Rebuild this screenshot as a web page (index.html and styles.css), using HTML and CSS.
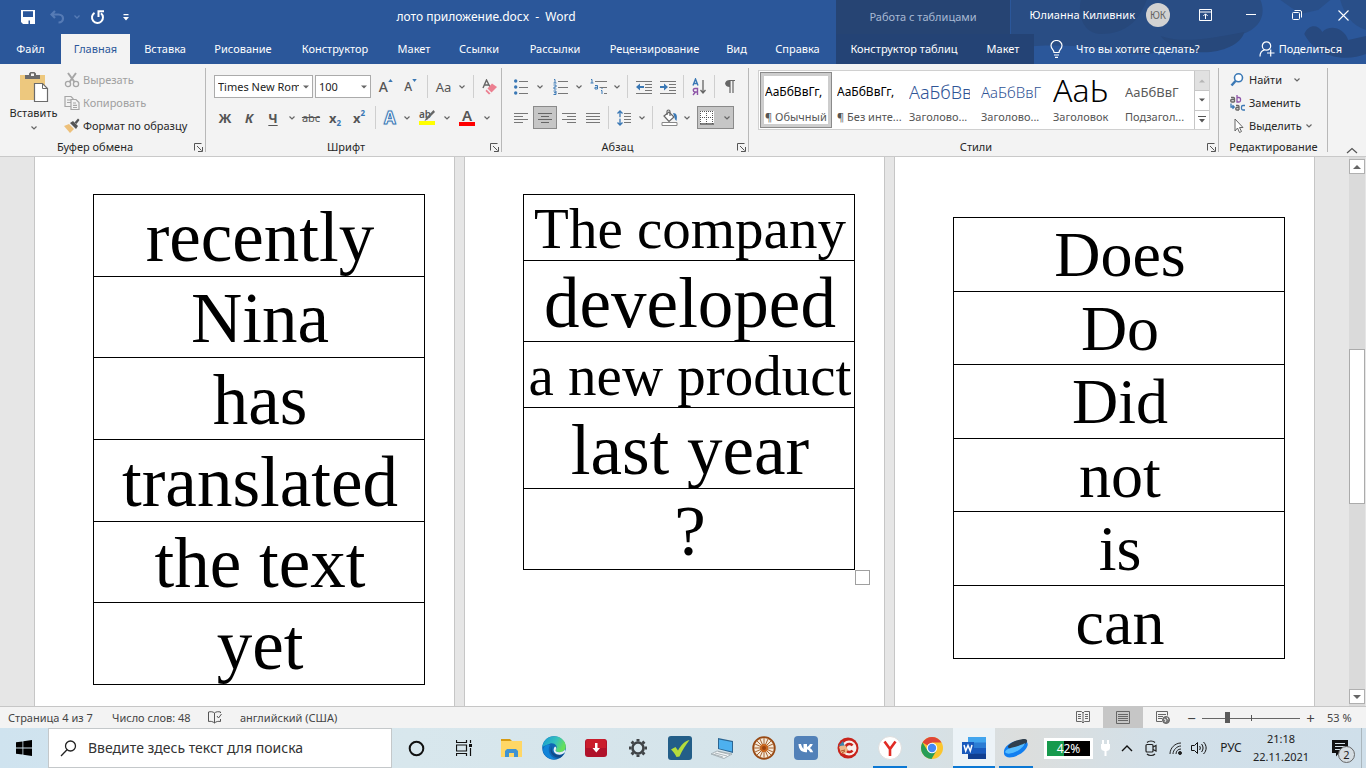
FILE: index.html
```html
<!DOCTYPE html>
<html lang="ru">
<head>
<meta charset="utf-8">
<title>лото приложение.docx - Word</title>
<link rel="stylesheet" href="styles.css">
</head>
<body>
<svg class="defs" aria-hidden="true">
  <symbol id="chev" viewBox="0 0 8 8"><path d="M1.500 2.500L4 5l2.500-2.500" fill="none" stroke="#666" stroke-width="1.200"/></symbol>
  <symbol id="tri" viewBox="0 0 8 8"><path d="M0 2h8L4 6z" fill="currentColor"/></symbol>
  <symbol id="launch" viewBox="0 0 9 9"><path d="M.5 7.500v-7h7M3 3l4.500 4.500M8.500 4v4.500H4" fill="none" stroke="#555"/></symbol>
</svg>
<div class="app">
  <header class="header">
    <svg class="pattern" viewBox="0 0 356 64" preserveAspectRatio="none" aria-hidden="true">
      <path d="M0 0h356v64H0z" fill="#2b579a"/>
      <path d="M0 0h250c6 14 0 28-18 34-20 8-44 6-58 10-20 6-34 12-50 10-30-6-70-12-124-6z" fill="#294d84"/>
      <path d="M70 0h66c-8 22-22 34-46 34-14 0-24-14-20-34zM150 36c24 8 50 2 84-4-4 14-26 22-48 20-18-2-30-8-36-16z" fill="#27487b"/>
      <path d="M294 34c4-10 14-10 18-2 8-8 22-4 26 8l18-4v18c-20 8-50 4-62-20z" fill="#27497f"/>
      <path d="M270 0h50l-12 10-18 4zM330 0h26v30c-14-4-22-16-26-30z" fill="#294f89"/>
    </svg>
    <div class="titlebar">
      <div class="title-main">
        <div class="qat">
          <button class="qbtn" aria-label="Сохранить"><svg width="14" height="14" viewBox="0 0 14 14"><path d="M0 0h14v14H2l-2-2zM2 1.500V6h10V1.500zM3 9v5h8V9z" fill="#fff" fill-rule="evenodd"/><path d="M2 12V1.500h10V7H2z" fill="#2b579a"/><path d="M1.500 7h11v2h-11zM5 10.500h2.500V14H3V9h8v5H9v-3.500z" fill="#fff"/></svg></button>
          <button class="qbtn dim" aria-label="Отменить"><svg width="15" height="14" viewBox="0 0 15 14"><path d="M5 1L1.500 4.500 5 8M2 4.500h6.500c6 0 6 8 0 8" fill="none" stroke="#567bb5" stroke-width="2.200"/></svg></button>
          <button class="qchev" aria-label="Список отмен"><svg width="8" height="8" viewBox="0 0 8 8"><path d="M1.500 2.500L4 5l2.500-2.500" fill="none" stroke="#567bb5" stroke-width="1.300"/></svg></button>
          <button class="qbtn" aria-label="Повторить"><svg width="15" height="15" viewBox="0 0 15 15"><path d="M4.500 2.800A5.500 5.500 0 1 0 11 3.200" fill="none" stroke="#fff" stroke-width="2"/><path d="M8.500 7V1.200h5.500" fill="none" stroke="#fff" stroke-width="2"/></svg></button>
          <button class="qbtn" aria-label="Настройка панели"><svg width="6" height="7" viewBox="0 0 6 7"><path d="M.5 0h5v1.200h-5zM0 3h6L3 6.500z" fill="#fff"/></svg></button>
        </div>
        <div class="doc-title">лото приложение.docx&nbsp; -&nbsp; Word</div>
      </div>
      <div class="ctx-title">Работа с таблицами</div>
      <div class="account">
        <span class="user">Юлианна Киливник</span>
        <span class="avatar">ЮК</span>
        <button class="cap" aria-label="Параметры ленты"><svg width="13" height="12" viewBox="0 0 13 12" fill="none" stroke="#fff"><path d="M.5.500h12v11H.5zM.5 3h12M6.500 10V5M4.300 7l2.200-2.200L8.700 7"/></svg></button>
        <button class="cap" aria-label="Свернуть"><svg width="10" height="10"><path d="M0 4.500h10" stroke="#fff"/></svg></button>
        <button class="cap" aria-label="Восстановить"><svg width="10" height="10" viewBox="0 0 10 10" fill="none" stroke="#fff"><rect x=".5" y="2.500" width="7" height="7" rx="1"/><path d="M2.500.500H8A1.500 1.500 0 0 1 9.500 2v5.500"/></svg></button>
        <button class="cap" aria-label="Закрыть"><svg width="11" height="11"><path d="M.5.500l10 10M10.500.500l-10 10" stroke="#fff" stroke-width="1.100"/></svg></button>
      </div>
    </div>
    <div class="tabbar">
      <nav class="tabs">
        <button>Файл</button><button class="active">Главная</button><button>Вставка</button><button>Рисование</button><button>Конструктор</button><button>Макет</button><button>Ссылки</button><button>Рассылки</button><button>Рецензирование</button><button>Вид</button><button>Справка</button>
      </nav>
      <nav class="ctx-tabs"><button>Конструктор таблиц</button><button>Макет</button></nav>
      <button class="tell"><svg width="13" height="18" viewBox="0 0 13 18" fill="none" stroke="#fff" stroke-width="1.200"><path d="M4 12.500c0-3-3-3.500-3-7a5.500 5 0 0 1 11 0c0 3.500-3 4-3 7zM4 15h5M5 17.300h3"/></svg>Что вы хотите сделать?</button>
      <button class="share"><svg width="16" height="16" viewBox="0 0 16 16" fill="none" stroke="#fff" stroke-width="1.200"><circle cx="7.500" cy="5" r="4.200"/><path d="M1 15.500c0-4 2-6 4.500-6.700M8 12h7.500M11.700 8.500v7"/></svg>Поделиться</button>
    </div>
  </header>

  <section class="ribbon" aria-label="Лента">
    <div class="group g-clip">
      <div class="clip">
        <button class="paste"><svg width="30" height="31" viewBox="0 0 30 31"><path d="M1 4h25v25H1z" fill="#edc87e"/><path d="M6 8V4h4V2.500L11.500 1h4L17 2.500V4h4v4z" fill="#6b6b6b"/><path d="M12 2.500h3V5h-3z" fill="#f3f3f3"/><path d="M15.500 12.500h8l5 5v13h-13z" fill="#fff" stroke="#6b6b6b" stroke-width="1.200"/><path d="M23.500 12.500v5h5" fill="none" stroke="#6b6b6b"/></svg><span>Вставить</span><svg width="8" height="8"><use href="#chev"/></svg></button>
        <div class="rows">
          <button class="line off"><svg width="16" height="16" viewBox="0 0 16 16" fill="none" stroke="#a6a6a6" stroke-width="1.300"><circle cx="4" cy="12" r="2.600"/><circle cx="12" cy="12" r="2.600"/><path d="M4 1l6.500 9M12 1L5.500 10" stroke-width="2"/></svg>Вырезать</button>
          <button class="line off"><svg width="16" height="16" viewBox="0 0 16 16" fill="#f3f3f3" stroke="#a6a6a6" stroke-width="1.200"><path d="M1 1.500h6l2 2v8H1zM3 5h4M3 7.500h4"/><path d="M7 4.500h5l3 3v7H7zM9 8h3M9 10.300h4M9 12.500h4"/></svg>Копировать</button>
          <button class="line"><svg width="16" height="16" viewBox="0 0 16 16"><path d="M0 8l5-2 5 5-4 4z" fill="#edc07a"/><path d="M6 5l3-2 5 5-2 3z" fill="#555"/><path d="M10.500 4.500l3.500-4L15.500 2l-3 4z" fill="#555"/></svg>Формат по образцу</button>
        </div>
      </div>
      <div class="caption"><span>Буфер обмена</span><button aria-label="Буфер обмена"><svg width="9" height="9"><use href="#launch"/></svg></button></div>
    </div>

    <div class="group g-font">
      <div class="tools">
        <div class="trow">
          <div class="combo c-name"><input aria-label="Шрифт" value="Times New Roman"><button aria-label="Список шрифтов"><svg width="6" height="6"><use href="#tri"/></svg></button></div>
          <div class="combo c-size"><input aria-label="Размер шрифта" value="100"><button aria-label="Список размеров"><svg width="6" height="6"><use href="#tri"/></svg></button></div>
          <button class="t wide grow-a">A<svg width="5" height="3" viewBox="0 0 6 4"><path d="M0 4h6L3 0z" fill="#3a78b5"/></svg></button>
          <button class="t grow-a small">A<svg width="5" height="3" viewBox="0 0 6 4"><path d="M0 0h6L3 4z" fill="#3a78b5"/></svg></button>
          <i class="sep"></i>
          <button class="t aa">Aa</button><button class="c" aria-label="Регистр"><svg width="8" height="8"><use href="#chev"/></svg></button>
          <i class="sep"></i>
          <button class="t" aria-label="Очистить формат"><svg width="16" height="16" viewBox="0 0 16 16"><path d="M1 9l3.500-8L8 8M2.500 6h4" fill="none" stroke="#666" stroke-width="1.400"/><path d="M10 4.500l5 3.500-5.500 5.500-4-4z" fill="#ec7f90"/><path d="M4.500 10.500l4 4-1.500 1-3.500-3.500z" fill="#ec7f90"/></svg></button>
        </div>
        <div class="trow">
          <button class="t bold">Ж</button><button class="t bold ital">К</button><button class="t bold under">Ч</button><button class="c" aria-label="Подчеркивание"><svg width="8" height="8"><use href="#chev"/></svg></button>
          <button class="t strike">abc</button><button class="t bold">x<sub>2</sub></button><button class="t bold">x<sup>2</sup></button>
          <i class="sep"></i>
          <button class="t slim effect">A</button><button class="c" aria-label="Эффекты"><svg width="8" height="8"><use href="#chev"/></svg></button>
          <button class="t wide mark" aria-label="Цвет выделения"><svg width="18" height="17" viewBox="0 0 18 17"><text x="1" y="9" class="ab">ab</text><path d="M15.500 1L8 9l-1.500 3 3-1.500L17 3z" fill="#666"/><path d="M1 12h16v4H1z" fill="#ff0"/></svg></button><button class="c" aria-label="Цвета выделения"><svg width="8" height="8"><use href="#chev"/></svg></button>
          <button class="t wide fcolor">A</button><button class="c" aria-label="Цвета текста"><svg width="8" height="8"><use href="#chev"/></svg></button>
        </div>
      </div>
      <div class="caption"><span>Шрифт</span><button aria-label="Шрифт"><svg width="9" height="9"><use href="#launch"/></svg></button></div>
    </div>

    <div class="group g-para">
      <div class="tools">
        <div class="trow">
          <button class="t" aria-label="Маркеры"><svg width="14" height="16" viewBox="0 0 14 16"><g fill="#3a78b5"><circle cx="1.700" cy="2" r="1.700"/><circle cx="1.700" cy="8" r="1.700"/><circle cx="1.700" cy="14" r="1.700"/></g><path d="M5 2.500h9M5 8.500h9M5 14.500h9" stroke="#777"/></svg></button><button class="c" aria-label="Вид маркера"><svg width="8" height="8"><use href="#chev"/></svg></button>
          <button class="t wide" aria-label="Нумерация"><svg width="15" height="16" viewBox="0 0 15 16"><path d="M1 .500h1v3.500M.500 4h3M.500 6h2.500v2H1v2h2.500M.500 12h2.500v3.500H.500M1 13.700h2" fill="none" stroke="#3a78b5"/><path d="M5 2.500h10M5 8.500h10M5 14.500h10" stroke="#777"/></svg></button><button class="c tight" aria-label="Вид номера"><svg width="8" height="8"><use href="#chev"/></svg></button>
          <button class="t wide" aria-label="Многоуровневый список"><svg width="17" height="16" viewBox="0 0 17 16"><path d="M1 .500h1v3.500M.500 4h3M5 6.500h2.500V10H5V8.300h2M11 11.500h1V15M12 9v1" fill="none" stroke="#3a78b5"/><path d="M5 2.500h12M9.500 8.500H17M14 14.500h3" stroke="#777"/></svg></button><button class="c tight" aria-label="Вид списка"><svg width="8" height="8"><use href="#chev"/></svg></button>
          <i class="sep"></i>
          <button class="t" aria-label="Уменьшить отступ"><svg width="16" height="14" viewBox="0 0 16 14"><path d="M0 1.500h16M9 4.500h7M9 7.500h7M9 10.500h7M0 13.500h16" stroke="#777"/><path d="M0 7l4-3.500V6h4v2H4v2.500z" fill="#3a78b5"/></svg></button>
          <button class="t" aria-label="Увеличить отступ"><svg width="16" height="14" viewBox="0 0 16 14"><path d="M0 1.500h16M9 4.500h7M9 7.500h7M9 10.500h7M0 13.500h16" stroke="#777"/><path d="M8 7L4 3.500V6H0v2h4v2.500z" fill="#3a78b5"/></svg></button>
          <i class="sep s7"></i>
          <button class="t" aria-label="Сортировка"><svg width="14" height="18" viewBox="0 0 14 18"><path d="M1 7.500L3.500 1 6 7.500M2 5.500h3" fill="none" stroke="#3a78b5" stroke-width="1.400"/><path d="M5.500 17v-6.500H3c-2.300 0-2.300 3.500 0 3.500h2.500M3.500 14L1 17" fill="none" stroke="#8e55a8" stroke-width="1.400"/><path d="M11 2v13M8.500 12l2.500 3 2.500-3" fill="none" stroke="#666" stroke-width="1.300"/></svg></button>
          <i class="sep s7"></i>
          <button class="t" aria-label="Все знаки"><svg width="10" height="13" viewBox="0 0 10 13"><path d="M4 .5h6M5 0v13M8 0v13" stroke="#666" stroke-width="1.200"/><path d="M5 0v7C-1.500 7-1.500 0 5 0z" fill="#666"/></svg></button>
        </div>
        <div class="trow">
          <button class="t" aria-label="По левому краю"><svg width="14" height="12"><path d="M0 1.500h14M0 4.500h9M0 7.500h14M0 10.500h9" stroke="#777"/></svg></button>
          <button class="t on" aria-label="По центру"><svg width="14" height="12"><path d="M0 1.500h14M3 4.500h8M0 7.500h14M3 10.500h8" stroke="#666"/></svg></button>
          <button class="t" aria-label="По правому краю"><svg width="14" height="12"><path d="M0 1.500h14M5 4.500h9M0 7.500h14M5 10.500h9" stroke="#777"/></svg></button>
          <button class="t" aria-label="По ширине"><svg width="14" height="12"><path d="M0 1.500h14M0 4.500h14M0 7.500h14M0 10.500h14" stroke="#777"/></svg></button>
          <i class="sep s7"></i>
          <button class="t" aria-label="Интервал"><svg width="14" height="16" viewBox="0 0 14 16"><path d="M3 1v14M.500 3.500L3 1l2.500 2.500M.500 12.500L3 15l2.500-2.500" fill="none" stroke="#3a78b5" stroke-width="1.300"/><path d="M1 7.200h4v1.500H1z" fill="#f3f3f3"/><path d="M7 3.500h7M7 6.500h7M7 9.500h7M7 12.500h7" stroke="#777"/></svg></button><button class="c tight" aria-label="Интервалы"><svg width="8" height="8"><use href="#chev"/></svg></button>
          <i class="sep"></i>
          <button class="t" aria-label="Заливка"><svg width="17" height="17" viewBox="0 0 17 17"><path d="M3 7l5-4 5 5-5 4.500z" fill="#fff" stroke="#666" stroke-width="1.200"/><path d="M6 6V2.500C6 .500 9 .500 9 2.500V7" fill="none" stroke="#666" stroke-width="1.200"/><path d="M12 4c4 0 4.500 3 3.500 8-1-1-2-2-2-4z" fill="#3a78b5"/><path d="M1 13.500h15v3H1z" fill="#fff" stroke="#888"/></svg></button><button class="c tight" aria-label="Цвет заливки"><svg width="8" height="8"><use href="#chev"/></svg></button>
          <button class="t on borders" aria-label="Границы"><svg width="14" height="14" viewBox="0 0 14 14"><path d="M0 0h14v14H0z" fill="#fff"/><path d="M.5 0v13M6.500 0v13M12.500 0v13M0 .5h14M0 6.500h14" stroke="#555" stroke-dasharray="1 1"/><path d="M0 13h14" stroke="#555" stroke-width="1.500"/></svg><svg width="8" height="8"><use href="#chev"/></svg></button>
        </div>
      </div>
      <div class="caption"><span>Абзац</span><button aria-label="Абзац"><svg width="9" height="9"><use href="#launch"/></svg></button></div>
    </div>

    <div class="group g-style">
      <div class="gallery">
        <button class="style sel"><b class="s-norm">АаБбВвГг,</b><span>¶ Обычный</span></button>
        <button class="style"><b class="s-norm">АаБбВвГг,</b><span>¶ Без инте...</span></button>
        <button class="style"><b class="s-h1">АаБбВв</b><span>Заголово...</span></button>
        <button class="style"><b class="s-h2">АаБбВвГ</b><span>Заголово...</span></button>
        <button class="style"><b class="s-title">АаЬ</b><span>Заголовок</span></button>
        <button class="style"><b class="s-sub">АаБбВвГ</b><span>Подзагол...</span></button>
        <div class="gscroll">
          <button class="dis" aria-label="Вверх"><svg class="flip" width="6" height="6"><use href="#tri"/></svg></button>
          <button aria-label="Вниз"><svg width="6" height="6"><use href="#tri"/></svg></button>
          <button aria-label="Все стили"><svg width="8" height="9" viewBox="0 0 8 9"><path d="M0 1.500h8" stroke="#555"/><path d="M1 4h6L4 7.500z" fill="#555"/></svg></button>
        </div>
      </div>
      <div class="caption"><span>Стили</span><button aria-label="Стили"><svg width="9" height="9"><use href="#launch"/></svg></button></div>
    </div>

    <div class="group g-edit">
      <div class="rows">
        <button class="line"><svg width="16" height="14" viewBox="0 0 16 14"><circle cx="8.500" cy="4.800" r="4" fill="#fff" stroke="#3a78b5" stroke-width="1.600"/><path d="M5.500 8L1.500 12.500" stroke="#3a78b5" stroke-width="2.500"/></svg>Найти<svg class="after" width="8" height="8"><use href="#chev"/></svg></button>
        <button class="line"><svg width="16" height="16" viewBox="0 0 16 16" fill="none" stroke-width="1.300"><path d="M1 2.500h2.500q1 0 1 1V7M4.500 4.500H2q-1.300 0-1.300 1.200T2 7h2.500" stroke="#666"/><path d="M7 0v7h2q1.500 0 1.500-1.500V4Q10.500 2.500 9 2.500H7" stroke="#8e55a8"/><path d="M6 10.500h2q1 0 1 1V15M9 12.500H7q-1.300 0-1.300 1.200T7 15h2" stroke="#666"/><path d="M15 10.500h-2q-1.500 0-1.500 1.500v1.500q0 1.500 1.500 1.500h2M1 8.500V12h3M2.500 10.300L4.200 12l-1.700 1.700" stroke="#3a78b5"/></svg>Заменить</button>
        <button class="line"><svg width="16" height="16" viewBox="0 0 16 16"><path d="M5 1v12l2.500-3 2 4.500 2-1-2-4H13z" fill="#fff" stroke="#666"/></svg>Выделить<svg width="8" height="8"><use href="#chev"/></svg></button>
      </div>
      <div class="caption"><span>Редактирование</span></div>
    </div>
    <button class="collapse" aria-label="Свернуть ленту"><svg width="12" height="7"><path d="M1 6l5-4.500L11 6" fill="none" stroke="#555" stroke-width="1.200"/></svg></button>
  </section>

  <main class="workspace">
    <div class="pages">
      <article class="page">
        <table class="words xl"><tbody><tr><td>recently</td></tr><tr><td>Nina</td></tr><tr><td>has</td></tr><tr><td>translated</td></tr><tr><td>the text</td></tr><tr><td>yet</td></tr></tbody></table>
      </article>
      <article class="page">
        <div class="tablewrap">
          <table class="words mixed"><tbody><tr class="short"><td>The company</td></tr><tr><td>developed</td></tr><tr class="short"><td>a new product</td></tr><tr><td>last year</td></tr><tr><td>?</td></tr></tbody></table>
          <span class="handle"></span>
        </div>
      </article>
      <article class="page low">
        <table class="words lg"><tbody><tr><td>Does</td></tr><tr><td>Do</td></tr><tr><td>Did</td></tr><tr><td>not</td></tr><tr><td>is</td></tr><tr><td>can</td></tr></tbody></table>
      </article>
    </div>
    <div class="scroll">
      <button aria-label="Прокрутить вверх"><svg class="flip" width="8" height="8"><use href="#tri"/></svg></button>
      <div class="track"><div class="thumb"></div></div>
      <button aria-label="Прокрутить вниз"><svg width="8" height="8"><use href="#tri"/></svg></button>
    </div>
  </main>

  <footer class="status">
    <span class="st-page">Страница 4 из 7</span>
    <span class="st-words">Число слов: 48</span>
    <svg width="14" height="13" viewBox="0 0 14 13" fill="none" stroke="#555"><path d="M6.500 12V2C5 .5 2.500.500.500 1v9.500c2-.5 4.500 0 6 1.500 1.500-1.500 4-2 6-1.500V8M6.500 2C8 .500 10.500.500 12.500 1v1M9 5l1.500 2L13.500 3"/></svg>
    <span class="st-lang">английский (США)</span>
    <div class="views">
      <button aria-label="Режим чтения"><svg width="14" height="13" viewBox="0 0 14 13" fill="none" stroke="#666"><path d="M.5.500h5L7 2l1.500-1.500h5v10h-5L7 12l-1.500-1.500h-5zM7 2v10M2 3.500h3M2 5.500h3M2 7.500h3M9 3.500h3M9 5.500h3M9 7.500h3"/></svg></button>
      <button class="on" aria-label="Разметка страницы"><svg width="14" height="13" fill="none" stroke="#666"><path d="M.5.500h13v12H.5zM2 3.500h10M2 5.500h10M2 7.500h10M2 9.500h10"/></svg></button>
      <button aria-label="Веб-документ"><svg width="14" height="13" viewBox="0 0 14 13" fill="none" stroke="#666"><path d="M6 10.500H.500V.500h11v4M2 3.500h8M2 5.500h5M2 7.500h4"/><circle cx="10" cy="9" r="3.500" fill="#777"/><path d="M8 8l2 1-1 2M11 6.500l1 2" stroke="#eee"/></svg></button>
    </div>
    <div class="zoomer">
      <button aria-label="Уменьшить">−</button>
      <input type="range" min="0" max="100" value="25" aria-label="Масштаб">
      <button aria-label="Увеличить">+</button>
      <span>53 %</span>
    </div>
  </footer>

  <div class="taskbar">
    <button class="start" aria-label="Пуск"><svg width="16" height="16" viewBox="0 0 16 16"><path d="M0 2.300l6.500-.9v6.200H0zM7.300 1.300L16 0v7.600H7.300zM0 8.400h6.500v6.200L0 13.700zM7.300 8.400H16V16l-8.700-1.300z"/></svg></button>
    <label class="search"><svg width="17" height="17" viewBox="0 0 17 17" fill="none" stroke="#222" stroke-width="1.300"><circle cx="10.500" cy="6" r="5"/><path d="M7 9.800L1 16"/></svg><input placeholder="Введите здесь текст для поиска" aria-label="Поиск"></label>
    <button class="start" aria-label="Кортана"><svg width="17" height="17"><circle cx="8.500" cy="8.500" r="6.800" fill="none" stroke="#111" stroke-width="2"/></svg></button>
    <button class="start" aria-label="Представление задач"><svg width="17" height="16" viewBox="0 0 17 16" fill="none" stroke="#111"><path d="M.5 0v2.500h10V0M.5 16v-2.500h10V16M.500 5h10v6H.500zM14.500 0v3M14.500 8v8" stroke-width="1.200"/><path d="M13 4h3v3h-3z" fill="#111" stroke="none"/></svg></button>
    <div class="apps">
      <button aria-label="Проводник"><svg width="22" height="20" viewBox="0 0 22 20"><path d="M0 1h9l2 2H0z" fill="#d79b12"/><path d="M0 3h21v16H0z" fill="#ffd766"/><path d="M4 19v-6l2-2h9l2 2v6h-4v-4H8v4z" fill="#3f93d2"/></svg></button>
      <button aria-label="Edge"><svg width="24" height="24" viewBox="0 0 24 24"><defs><linearGradient id="eg" x1="0" y1="0" x2="1" y2=".4"><stop stop-color="#1597d4"/><stop offset=".6" stop-color="#35c1bd"/><stop offset="1" stop-color="#66e05a"/></linearGradient></defs><circle cx="12" cy="12" r="11.800" fill="#0f66b4"/><path d="M.3 11C1.500 4 6 .200 12 .200c7 0 11.800 5 11.800 10 0 4-3 6-6.500 6-3 0-4.300-1.200-3.500-2.500 3-4-2-7.500-6-6C4 9 2.500 10 .3 11z" fill="url(#eg)"/><path d="M8 9c-3 5-.5 12 6 14-6 1-11-2-13-8 0-4 3-7 7-6z" fill="#1284d8"/><path d="M10 10c-2 5 2 9 7 9 2 0 4-1 5-2-.5 1.500-2 3.500-4 4.700C11 22 6 16 10 10z" fill="#114a8b"/><path d="M13.800 13.700c-.8 1.300.5 2.500 3.500 2.500 2.500 0 4.500-1 5.700-2.700l.5 2c-2 3.500-8 4.500-11 1-1.500-2-1-4.500.5-6 1.500.5 1.500 2.200.8 3.200z" fill="#e4eff6"/></svg></button>
      <button aria-label="Загрузчик"><svg width="22" height="18"><rect width="22" height="18" rx="3" fill="#b0122a"/><path d="M1 3a3 3 0 0 1 3-3h14a3 3 0 0 1 3 3v6H1z" fill="#ca1d2c"/><path d="M10 4h2.500v5H15l-3.700 4.500L7.500 9H10z" fill="#fff"/></svg></button>
      <button aria-label="Параметры"><svg width="20" height="20" viewBox="-10 -10 20 20"><circle r="5.500" fill="none" stroke="#404447" stroke-width="2.600"/><path d="M0-6.500V-9M0 6.500V9M-6.500 0H-9M6.500 0H9M-4.600-4.600l-1.800-1.800M4.600 4.600l1.800 1.800M-4.600 4.600l-1.800 1.800M4.600-4.600l1.800-1.800" stroke="#404447" stroke-width="3"/></svg></button>
      <button aria-label="Задачи"><svg width="24" height="24"><rect width="24" height="24" rx="3" fill="#235e88"/><path d="M3 13.500l4.500-2.500 2.500 3.500C13 9 17 5 21.500 4 18 8.500 14 14.500 11.500 20.500l-3 .5C7 18 5 15 3 13.500z" fill="#b5dc3c"/></svg></button>
      <button aria-label="Компьютер"><svg width="24" height="22" viewBox="0 0 24 22"><path d="M8 1l15 3v12L8 12z" fill="#2b6592"/><path d="M9 2.500L22 5v9.500L9 11.500z" fill="#4db0ef"/><path d="M7 14l15 3-8 4.500L1 17z" fill="#f4f7f9" stroke="#8d999f" stroke-width=".7"/><path d="M5 16l12 3M8 14.500l12 3M3 17l10 3" stroke="#9ba6aa" stroke-width=".8"/></svg></button>
      <button aria-label="Колесо"><svg width="24" height="24" viewBox="-12 -12 24 24"><circle r="10.800" fill="#f6ead9" stroke="#984913" stroke-width="1.800"/><path d="M0-10V10M-10 0H10M-7-7L7 7M-7 7L7-7M-4-9L4 9M-9-4L9 4M4-9L-4 9M9-4L-9 4" stroke="#9d5520" stroke-width=".9"/><circle r="4" fill="#c9661c"/><circle r="2" fill="#98410d"/></svg></button>
      <button aria-label="ВКонтакте"><svg width="24" height="24"><rect width="24" height="24" rx="4" fill="#5281b8"/><path d="M4.500 8H7q1 4 2.500 5V8h3.500v3q2-1 3-3h2.800q-.8 2.500-2.800 4 2.200 1.500 3.200 4.200h-3q-1-2.500-3.200-3v3h-1.200C7 16.200 4.700 13 4.500 8z" fill="#fff"/></svg></button>
      <button aria-label="CCleaner"><svg width="22" height="22" viewBox="0 0 22 22"><circle cx="11" cy="11" r="10.500" fill="#c8241c"/><circle cx="12" cy="11" r="7.500" fill="#f7efec"/><path d="M15.500 8.500a4 4 0 1 0 0 5" fill="none" stroke="#c8241c" stroke-width="2.600"/><path d="M2 10l4-3 3 2 2 4-3 4-4-1z" fill="#eeb887"/><path d="M1.500 9L6 4l1.500 4.500z" fill="#3c84ad"/><path d="M4 14l4-1M5 16l3-2" stroke="#b5552a"/></svg></button>
      <button class="run" aria-label="Яндекс Браузер"><svg width="24" height="24"><circle cx="12" cy="12" r="11.500" fill="#fff" stroke="#ddd"/><path d="M6.500 5.500L12 13l5.500-7.500M12 12.500V20" fill="none" stroke="#e12b24" stroke-width="2.600"/></svg></button>
      <button aria-label="Chrome"><svg width="22" height="22" viewBox="0 0 22 22"><circle cx="11" cy="11" r="11" fill="#fbc52e"/><path d="M11 11L1.500 5.500A11 11 0 0 1 20.500 5.500H11z" fill="#df4537"/><path d="M1.500 5.500A11 11 0 0 0 10.500 22l5-8.500L6.500 13.500z" fill="#279d57"/><circle cx="11" cy="11" r="5.200" fill="#fff"/><circle cx="11" cy="11" r="4.200" fill="#4688f4"/></svg></button>
      <button class="run current" aria-label="Word"><svg width="24" height="22" viewBox="0 0 24 22"><path d="M6 0h18v22H6z" fill="#2b7cd3"/><path d="M6 0h18v5.500H6z" fill="#41a5ee"/><path d="M6 11h18v5.500H6z" fill="#185abd"/><path d="M6 16.500h18V22H6z" fill="#103f91"/><path d="M0 5h12v12H0z" fill="#185abd"/><path d="M2 8l1.700 6L6 8.500 8.300 14 10 8" fill="none" stroke="#fff" stroke-width="1.500"/></svg></button>
      <button class="run" aria-label="Яндекс Диск"><svg width="26" height="20" viewBox="0 0 26 20"><path d="M1 15C0 9 8 3 19 2c7 0 7 6 3 10-5 6-19 11-21 4z" fill="#127ff0"/><path d="M5 8c4-5 12-7 17-7 4 1 2 5-2 6-5 3-16 6-15 1z" fill="#30404e"/><path d="M2 14c2-5 11-4 20-9-2 7-17 14-20 9z" fill="#55bcff"/></svg></button>
    </div>
    <div class="tray">
      <div class="battery"><span>42%</span></div>
      <svg width="11" height="16" viewBox="0 0 11 16"><path d="M2 0h2v4h3V0h2v4h1v4c0 2-2 3-3.500 3v5h-2v-5C3 11 1 10 1 8V4h1z" fill="#fff"/></svg>
      <button aria-label="Скрытые значки"><svg width="12" height="8"><path d="M1 7l5-5 5 5" fill="none" stroke="#111" stroke-width="1.400"/></svg></button>
      <button aria-label="Камера"><svg width="12" height="17" viewBox="0 0 12 17" fill="none" stroke="#222" stroke-width="1.200"><rect x="1" y="4.500" width="7" height="7.500" rx="1"/><path d="M8 7l3-1.500v5.500L8 9.500M2 2.500c2-2 6-2 8 0M2 14c2 2 6 2 8 0"/></svg></button>
      <button aria-label="Сеть"><svg width="13" height="13" viewBox="0 0 13 13" fill="none" stroke="#222"><path d="M1 12C1 6 6 1 12 1M4 12c0-4 4-8 8-8M7 12c0-3 2-5 5-5"/><circle cx="11" cy="11" r="1.500" fill="#222"/></svg></button>
      <button aria-label="Звук"><svg width="16" height="14" viewBox="0 0 16 14" fill="none" stroke="#111"><path d="M.5 4.500h3l3-3v11l-3-3h-3zM8.500 5c1 1 1 3 0 4M10.500 3c2 2.500 2 5.500 0 8M12.500 1c3.500 3.500 3.500 8.500 0 12"/></svg></button>
      <span class="lang">РУС</span>
      <div class="clock"><span>21:18</span><span>22.11.2021</span></div>
      <button class="note" aria-label="Уведомления"><svg width="16" height="17" viewBox="0 0 16 17"><path d="M0 0h16v13H7l-3 3.500V13H0z" fill="#111"/><path d="M3 3.500h10M3 6.500h10M3 9.500h6" stroke="#d4e0e8"/></svg><span>2</span></button>
    </div>
  </div>
</div>
</body>
</html>
```

FILE: styles.css
```css
* { box-sizing: border-box; }
body { margin: 0; font: 11px/16px "Noto Sans", "Open Sans", sans-serif; color: #262626; }
button { border: 0; padding: 0; background: none; font: inherit; color: inherit; white-space: nowrap; }
input { font: inherit; color: inherit; border: 0; padding: 0; background: none; min-width: 0; outline: 0; }
svg { display: block; flex: none; }
.defs { position: absolute; width: 0; height: 0; }
.flip { transform: rotate(180deg); }
.app { display: flex; flex-direction: column; height: 100vh; overflow: hidden; }

/* header */
.header { position: relative; background: #2b579a; color: #fff; flex: none; }
.pattern { position: absolute; right: 0; top: 0; width: 26%; height: 100%; }
.titlebar, .tabbar { position: relative; display: grid; }
.titlebar { grid-template-columns: 836px 174px 1fr; height: 34px; }
.title-main { display: flex; align-items: center; }
.qat { display: flex; align-items: center; padding-left: 16px; }
.qbtn { width: 24px; height: 24px; display: grid; place-items: center; margin-right: 5px; }
.qbtn.dim { margin-right: 0; }
.qchev { width: 16px; height: 24px; display: grid; place-items: center; }
.doc-title { flex: 1; text-align: center; padding-right: 7px; font-size: 12px; }
.ctx-title { background: #264473; color: #a9bad4; display: grid; place-items: center; }
.account { display: flex; align-items: center; justify-content: flex-end; height: 30px; }
.avatar { width: 24px; height: 24px; border-radius: 50%; background: #d2d2d2; color: #666; display: grid; place-items: center; margin: 0 12px 0 11px; font-size: 10px; }
.cap { width: 46px; height: 30px; display: grid; place-items: center; }
.tabbar { grid-template-columns: 836px 198px auto 1fr; height: 30px; }
.tabs { display: grid; grid-template-columns: 61px 69px 70px 86px 98px 60px 70px 82px 117px 47px 75px; }
.tabs .active { background: #f3f3f3; color: #2b579a; }
.ctx-tabs { display: grid; grid-template-columns: 136px 62px; background: #244375; }
.tell, .share { display: flex; align-items: center; }
.tell { padding-left: 16px; gap: 13px; }
.share { justify-self: end; gap: 4px; padding-right: 24px; }

/* ribbon */
.ribbon { display: flex; align-items: stretch; height: 93px; padding-top: 4px; background: #f3f3f3; border-bottom: 1px solid #c9c9c9; flex: none; }
.group { display: flex; flex-direction: column; background: linear-gradient(#b8b8b8, #b8b8b8) right top / 1px 84px no-repeat; }
.caption { margin-top: auto; height: 18px; display: flex; align-items: center; }
.caption span { flex: 1; text-align: center; }
.caption button { width: 16px; height: 16px; display: grid; place-items: center; }
.g-clip { width: 206px; }
.g-font { width: 296px; }
.g-para { width: 247px; }
.g-style { width: 470px; }
.g-edit { width: 109px; }
.clip { display: flex; }
.paste { width: 62px; display: flex; flex-direction: column; align-items: center; padding: 3px 0 0 5px; }
.paste span { margin: 3px 0; }
.rows { display: flex; flex-direction: column; }
.line { display: flex; align-items: center; height: 23px; gap: 3px; }
.clip .line { padding-left: 2px; }
.off { color: #a0a0a0; }
.tools { display: flex; flex-direction: column; padding: 7px 0 0 7px; gap: 8px; }
.trow { display: flex; height: 23px; align-items: stretch; }
.t { width: 24px; display: flex; align-items: center; justify-content: center; color: #555; font-size: 13px; }
.t.wide { width: 26px; }
.t.slim { width: 20px; }
.c { width: 14px; display: grid; place-items: center; }
.c.tight { width: 12px; }
.sep { width: 9px; display: flex; justify-content: center; }
.sep.s7 { width: 7px; }
.sep::before { content: ""; width: 1px; background: #cfcfcf; }
.combo { display: flex; background: #fff; border: 1px solid #ababab; margin-right: 2px; color: #222; }
.combo:first-child { margin-left: 1px; }
.combo input { flex: 1; padding-left: 3px; }
.combo button { width: 13px; display: grid; place-items: center; color: #666; }
.c-name { width: 99px; }
.c-size { width: 56px; }
.grow-a { font-size: 14px; font-weight: 500; }
.grow-a.small { font-size: 12px; }
.grow-a svg { align-self: flex-start; margin-top: 4px; }
.bold { font-weight: 700; }
.ital { font-style: italic; }
.under { text-decoration: underline; text-underline-offset: 2px; }
.strike { text-decoration: line-through; font-size: 11px; }
.t sub, .t sup { font-size: 8px; line-height: 8px; color: #3a78b5; }
.t sub { align-self: flex-end; margin-bottom: 2px; }
.t sup { align-self: flex-start; margin-top: 3px; }
.effect { font-size: 17px; color: #fff; -webkit-text-stroke: 1px #3a78b5; font-weight: 700; text-shadow: 0 0 2px #7fb0e0; }
.fcolor { font-size: 15px; font-weight: 600; line-height: 18px; align-items: flex-start; background: linear-gradient(#f00, #f00) 5px 16px / 16px 4px no-repeat; }
.mark svg { overflow: visible; }
.ab { font: 600 10px "Noto Sans", sans-serif; fill: #555; }
.on { background: #c6c6c6; outline: 1px solid #8a8a8a; outline-offset: -1px; }
.borders { width: 37px; justify-content: space-between; padding: 0 3px; margin-left: 4px; }
.gallery { display: flex; margin: 2px 9px 0; height: 60px; border: 1px solid #d0d0d0; background: #fff; padding-left: 1px; }
.style { width: 72px; padding: 4px 4px 0 5px; display: flex; flex-direction: column; text-align: left; color: #555; }
.style b { font-weight: 400; height: 34px; width: 61px; line-height: 34px; overflow: hidden; color: #000; }
.style span { width: 64px; line-height: 16px; }
.style.sel { border: 1px solid #8a8a8a; box-shadow: inset 0 0 0 3px #cdcdcd; padding: 2px 3px 0 4px; height: 56px; margin-top: 1px; }
.style b.s-norm { font-size: 12px; }
.style b.s-h1 { font-size: 18px; color: #2f5496; font-weight: 300; }
.style b.s-h2 { font-size: 15px; color: #2f5496; font-weight: 300; }
.style b.s-title { font-size: 32px; line-height: 30px; font-weight: 300; }
.style b.s-sub { font-size: 13px; color: #5a5a5a; }
.gscroll { margin-left: auto; width: 15px; display: grid; grid-template-rows: 1fr 1fr 1fr; border-left: 1px solid #c6c6c6; color: #555; }
.gscroll button { display: grid; place-items: center; }
.gscroll button + button { border-top: 1px solid #c6c6c6; }
.gscroll .dis { background: #e1e1e1; color: #b5b5b5; }
.g-edit .rows { padding-left: 11px; }
.after { margin-left: 8px; }
.collapse { margin: auto 8px 0 auto; height: 12px; }

/* document */
.workspace { flex: 1; min-height: 0; display: flex; background: #e6e6e6; }
.pages { flex: 1; display: flex; gap: 9px; padding-left: 34px; overflow: hidden; }
.page { flex: none; width: 421px; background: #fff; border: solid #c6c6c6; border-width: 0 1px; padding: 37px 29px 0 58px; }
.page.low { padding-top: 60px; }
.words { border-collapse: collapse; width: 332px; font-family: "Liberation Serif", serif; color: #000; text-align: center; table-layout: fixed; }
.words td { border: 1px solid #000; padding: 4px 0 0 2px; white-space: nowrap; line-height: 1; }
.xl { font-size: 71px; height: 491px; }
.lg { font-size: 64px; height: 442px; }
.lg td { padding-top: 2px; }
.mixed { font-size: 71px; }
.mixed tr { height: 81px; }
.mixed .short { font-size: 57px; height: 66px; }
.mixed .short td { padding-top: 2px; }
.tablewrap { position: relative; width: 332px; }
.handle { position: absolute; left: 100%; top: 100%; width: 15px; height: 15px; border: 1px solid #a0a0a0; background: #fff; }
.scroll { width: 16px; margin-right: 1px; padding: 2px 0; display: flex; flex-direction: column; background: #dadada; }
.scroll button { height: 15px; border: 1px solid #b0b0b0; background: #fff; display: grid; place-items: center; color: #666; }
.track { flex: 1; display: grid; grid-template-rows: 34% 30% 1fr; }
.thumb { grid-row: 2; background: #fff; border: 1px solid #ababab; }

/* status bar */
.status { flex: none; height: 22px; display: flex; align-items: center; background: #f3f3f3; border-top: 1px solid #c6c6c6; padding-left: 8px; color: #444; }
.st-page { width: 104px; }
.st-words { width: 96px; }
.st-lang { margin-left: 18px; }
.views { margin-left: auto; display: flex; height: 100%; }
.views button { width: 40px; display: grid; place-items: center; }
.views .on { background: #c6c6c6; outline: 0; }
.zoomer { display: flex; align-items: center; padding: 0 14px 0 2px; }
.zoomer button { width: 13px; font-size: 15px; }
.zoomer span { width: 25px; margin-left: 10px; white-space: nowrap; }
input[type="range"] { appearance: none; width: 98px; height: 12px; margin: 0 4px; background: linear-gradient(#555, #555) 49px 3px / 1px 6px no-repeat, linear-gradient(#666, #666) 0 6px / 100% 1px no-repeat; }
input[type="range"]::-webkit-slider-thumb { appearance: none; width: 5px; height: 11px; background: #5a5a5a; }

/* taskbar */
.taskbar { flex: none; height: 40px; display: flex; background: linear-gradient(90deg, #cfe3ef, #d8e7ed 30%, #d3e2e9 65%, #dcdedd 75%, #d2e0e9 85%, #cfdfea); color: #222; }
.start { width: 48px; display: grid; place-items: center; }
.search { width: 344px; display: flex; align-items: center; gap: 11px; padding-left: 11px; background: #fff; border: 1px solid #c4c8ca; font-size: 14px; }
.search input { flex: 1; }
.search input::placeholder { color: #333; opacity: 1; }
.apps { display: flex; margin-left: 3px; }
.apps button { width: 42px; display: grid; place-items: center; }
.run { background: linear-gradient(#0b78d4, #0b78d4) center bottom / 34px 2px no-repeat; }
.run.current { background: linear-gradient(#0b78d4, #0b78d4) center bottom / 100% 2px no-repeat, #ecf3f7; }
.tray { margin-left: auto; display: flex; align-items: center; }
.battery { width: 49px; height: 21px; border: 3px solid #fff; background: linear-gradient(90deg, #16994c 40%, #000 40%); color: #fff; font-size: 12px; display: grid; place-items: center; margin-right: 7px; }
.tray button { width: 24px; height: 40px; display: grid; place-items: center; }
.tray > svg + button { margin-left: 4px; }
.lang { width: 40px; text-align: center; font-size: 12px; }
.clock { width: 60px; display: flex; flex-direction: column; text-align: center; line-height: 18px; }
.tray .note { position: relative; width: 44px; margin: 0 4px 0 7px; border-right: 1px solid #aab6bd; }
.note span { position: absolute; left: 20px; top: 18px; width: 17px; height: 17px; line-height: 15px; border-radius: 50%; border: 1px solid #666; background: #d5dde2; font-size: 11px; }
```
